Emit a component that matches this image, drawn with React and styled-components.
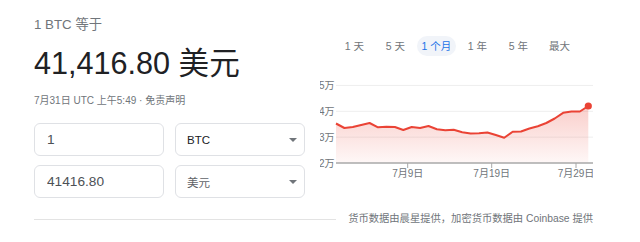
import { createGlobalStyle, styled } from "styled-components";

const GlobalStyle = createGlobalStyle`
  body {
    margin: 0;
    background: #fff;
    font-family: "Liberation Sans", Arial, "Noto Sans CJK SC", sans-serif;
  }
`;

const Page = styled.div`
  width: 640px;
  height: 242px;
  box-sizing: border-box;
  padding: 17px 47px 0 34px;
  overflow: hidden;
`;

const Top = styled.div`
  display: flex;
  align-items: flex-start;
`;

const Left = styled.div`
  width: 271px;
  flex: none;
`;

const Right = styled.div`
  margin-left: 15px;
  padding-top: 19px;
`;

const Caption = styled.div`
  font-size: 13.3px;
  line-height: 16px;
  color: #70757a;
`;

const Amount = styled.div`
  margin-top: 12px;
  font-size: 30.6px;
  line-height: 36px;
  color: #202124;
`;

const Meta = styled.div`
  margin-top: 12.5px;
  font-size: 10px;
  line-height: 14px;
  color: #70757a;
`;

const Converter = styled.div`
  margin-top: 15.5px;
  display: grid;
  grid-template-columns: 130px 130px;
  column-gap: 11px;
  row-gap: 9px;
`;

const Field = styled.input`
  box-sizing: border-box;
  width: 130px;
  height: 33px;
  padding: 0 12px;
  border: 1px solid #dfe1e5;
  border-radius: 6px;
  font-family: inherit;
  font-size: 13.7px;
  color: #4d5156;
  background: #fff;
  outline: none;
`;

const Select = styled.div`
  box-sizing: border-box;
  height: 33px;
  padding: 0 7px 0 11px;
  border: 1px solid #dfe1e5;
  border-radius: 6px;
  display: flex;
  align-items: center;
  justify-content: space-between;
  font-size: 11.5px;
  color: ${(p) => (p.$muted ? "#5f6368" : "#202124")};
  cursor: pointer;
`;

const Caret = () => (
  <svg width="8" height="4" viewBox="0 0 8 4">
    <path d="M0 0h8L4 4z" fill="#70757a" />
  </svg>
);

const Tabs = styled.div`
  margin-left: 14px;
  display: grid;
  grid-template-columns: repeat(6, 41px);
  justify-items: center;
`;

const Tab = styled.div`
  height: 20px;
  line-height: 20px;
  padding: 0 5px;
  border-radius: 10px;
  font-size: 10.5px;
  white-space: nowrap;
  color: ${(p) => (p.$active ? "#1a73e8" : "#70757a")};
  background: ${(p) => (p.$active ? "#f1f4f9" : "transparent")};
  cursor: pointer;
`;

const ChartSvg = styled.svg`
  display: block;
  margin-top: 20px;
`;

const Footer = styled.div`
  margin-top: 14px;
  display: flex;
  align-items: center;
  gap: 12px;
`;

const Divider = styled.div`
  flex: 1;
  height: 1px;
  background: #e3e3e3;
`;

const Source = styled.div`
  font-size: 10.3px;
  line-height: 14px;
  color: #70757a;
  white-space: nowrap;
`;

const prices = [
  35280, 33540, 33930, 34700, 35470, 33810, 34040, 33930, 32770, 33930, 33540,
  34310, 33080, 32690, 32840, 31910, 31410, 31490, 31800, 30830, 29750, 32070,
  32190, 33350, 34240, 35470, 37210, 39420, 39920, 39920, 42050,
];

const X0 = 16;
const STEP = 8.41;
const BASE = 87;
const UNIT = 25.85;
const yOf = (v) => BASE - ((v - 20000) / 10000) * UNIT;

function Chart() {
  const pts = prices.map((v, i) => [X0 + i * STEP, yOf(v)]);
  const line = pts.map(([x, y], i) => `${i ? "L" : "M"}${x.toFixed(1)} ${y.toFixed(1)}`).join(" ");
  const last = pts[pts.length - 1];
  const area = `${line} L${last[0].toFixed(1)} ${BASE} L${X0} ${BASE} Z`;
  const grid = [5, 4, 3];
  const ticks = [
    { x: 87.7, label: "7月9日" },
    { x: 171.7, label: "7月19日" },
    { x: 256, label: "7月29日" },
  ];

  return (
    <ChartSvg width="273" height="106" viewBox="0 0 273 106">
      <defs>
        <linearGradient id="fill" x1="0" y1="0" x2="0" y2="1">
          <stop offset="0" stopColor="#ea4335" stopOpacity="0.26" />
          <stop offset="1" stopColor="#ea4335" stopOpacity="0.04" />
        </linearGradient>
      </defs>
      {grid.map((n) => (
        <line key={n} x1={X0} x2="273" y1={yOf(n * 10000)} y2={yOf(n * 10000)} stroke="#eeeeee" strokeWidth="1" />
      ))}
      <path d={area} fill="url(#fill)" />
      <path d={line} fill="none" stroke="#ea4335" strokeWidth="2" strokeLinejoin="round" />
      <circle cx={last[0]} cy={last[1]} r="3.6" fill="#ea4335" />
      <line x1={X0} x2="273" y1={BASE} y2={BASE} stroke="#a8a8a8" strokeWidth="1.5" />
      {ticks.map((t) => (
        <g key={t.label}>
          <line x1={t.x} x2={t.x} y1={BASE} y2={BASE + 5} stroke="#a8a8a8" strokeWidth="1" />
          <text x={t.x} y="101" textAnchor="middle" fontSize="10" fill="#70757a" fontFamily="Liberation Sans, Noto Sans CJK SC, sans-serif">
            {t.label}
          </text>
        </g>
      ))}
      {[5, 4, 3, 2].map((n) => (
        <text key={n} x="14.5" y={yOf(n * 10000) + 3.6} textAnchor="end" fontSize="10" fill="#70757a" fontFamily="Liberation Sans, Noto Sans CJK SC, sans-serif">
          {n}万
        </text>
      ))}
    </ChartSvg>
  );
}

export default function App() {
  const ranges = ["1 天", "5 天", "1 个月", "1 年", "5 年", "最大"];

  return (
    <Page>
      <GlobalStyle />
      <Top>
        <Left>
          <Caption>1 BTC 等于</Caption>
          <Amount>41,416.80 美元</Amount>
          <Meta>7月31日 UTC 上午5:49 · 免责声明</Meta>
          <Converter>
            <Field defaultValue="1" />
            <Select>
              <span>BTC</span>
              <Caret />
            </Select>
            <Field defaultValue="41416.80" />
            <Select $muted>
              <span>美元</span>
              <Caret />
            </Select>
          </Converter>
        </Left>
        <Right>
          <Tabs>
            {ranges.map((r) => (
              <Tab key={r} $active={r === "1 个月"}>
                {r}
              </Tab>
            ))}
          </Tabs>
          <Chart />
        </Right>
      </Top>
      <Footer>
        <Divider />
        <Source>货币数据由晨星提供，加密货币数据由 Coinbase 提供</Source>
      </Footer>
    </Page>
  );
}
